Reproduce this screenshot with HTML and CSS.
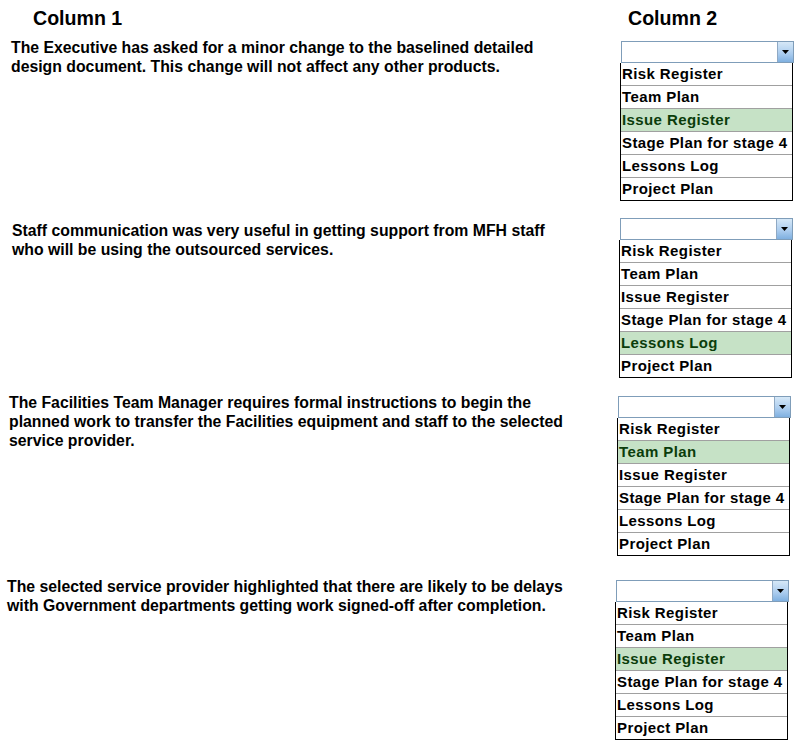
FILE: index.html
```html
<!DOCTYPE html>
<html>
<head>
<meta charset="utf-8">
<link rel="stylesheet" href="styles.css">
</head>
<body>
<div class="page">
  <div class="header">
    <div class="col1">Column 1</div>
    <div class="col2">Column 2</div>
  </div>

  <div class="block b1">
    <p class="q">The Executive has asked for a minor change to the baselined detailed<br>design document. This change will not affect any other products.</p>
    <div class="dd">
      <div class="sel"><span class="btn"><svg width="7" height="4" viewBox="0 0 7 4"><path d="M0 0H7L3.5 4Z" fill="#000"/></svg></span></div>
      <ul class="list">
        <li>Risk Register</li>
        <li>Team Plan</li>
        <li class="on">Issue Register</li>
        <li>Stage Plan for stage 4</li>
        <li>Lessons Log</li>
        <li>Project Plan</li>
      </ul>
    </div>
  </div>

  <div class="block b2">
    <p class="q">Staff communication was very useful in getting support from MFH staff<br>who will be using the outsourced services.</p>
    <div class="dd">
      <div class="sel"><span class="btn"><svg width="7" height="4" viewBox="0 0 7 4"><path d="M0 0H7L3.5 4Z" fill="#000"/></svg></span></div>
      <ul class="list">
        <li>Risk Register</li>
        <li>Team Plan</li>
        <li>Issue Register</li>
        <li>Stage Plan for stage 4</li>
        <li class="on">Lessons Log</li>
        <li>Project Plan</li>
      </ul>
    </div>
  </div>

  <div class="block b3">
    <p class="q">The Facilities Team Manager requires formal instructions to begin the<br>planned work to transfer the Facilities equipment and staff to the selected<br>service provider.</p>
    <div class="dd">
      <div class="sel"><span class="btn"><svg width="7" height="4" viewBox="0 0 7 4"><path d="M0 0H7L3.5 4Z" fill="#000"/></svg></span></div>
      <ul class="list">
        <li>Risk Register</li>
        <li class="on">Team Plan</li>
        <li>Issue Register</li>
        <li>Stage Plan for stage 4</li>
        <li>Lessons Log</li>
        <li>Project Plan</li>
      </ul>
    </div>
  </div>

  <div class="block b4">
    <p class="q">The selected service provider highlighted that there are likely to be delays<br>with Government departments getting work signed-off after completion.</p>
    <div class="dd">
      <div class="sel"><span class="btn"><svg width="7" height="4" viewBox="0 0 7 4"><path d="M0 0H7L3.5 4Z" fill="#000"/></svg></span></div>
      <ul class="list">
        <li>Risk Register</li>
        <li>Team Plan</li>
        <li class="on">Issue Register</li>
        <li>Stage Plan for stage 4</li>
        <li>Lessons Log</li>
        <li>Project Plan</li>
      </ul>
    </div>
  </div>
</div>
</body>
</html>
```

FILE: styles.css
```css
html, body {
  margin: 0;
  padding: 0;
  background: #fff;
}
body {
  font-family: "Liberation Sans", Arial, sans-serif;
  color: #000;
  width: 799px;
  height: 753px;
  overflow: hidden;
}
.page {
  display: flex;
  flex-direction: column;
}
.header {
  display: flex;
  height: 41px;
  font-weight: bold;
  font-size: 19.6px;
}
.col1 {
  margin-left: 33px;
  margin-top: 7px;
  width: 595px;
}
.col2 {
  margin-top: 7px;
}
.block {
  display: flex;
  justify-content: space-between;
  align-items: flex-start;
}
.q {
  margin: 0;
  font-size: 15.8px;
  font-weight: bold;
  line-height: 19px;
}
.b1 { padding-left: 11px; padding-right: 5px; height: 177px; }
.b1 .q { margin-top: -3px; }
.b2 { padding-left: 12px; padding-right: 6px; height: 178px; }
.b2 .q { margin-top: 3px; }
.b3 { padding-left: 9px; padding-right: 8px; height: 184px; }
.b3 .q { margin-top: -3px; }
.b4 { padding-left: 7px; padding-right: 10px; }
.b4 .q { margin-top: -3px; }

.dd {
  width: 173px;
  display: flex;
  flex-direction: column;
}
.sel {
  height: 20px;
  border: 1px solid #7f9db9;
  background: #fff;
  display: flex;
  justify-content: flex-end;
  align-items: stretch;
}
.btn {
  width: 15px;
  background: linear-gradient(#d6e8f7, #a9cbee 60%, #7fb0e0);
  border-left: 1px solid #8fa9c4;
  display: flex;
  align-items: center;
  justify-content: center;
}
.list {
  list-style: none;
  margin: 0 1px 0 -1px;
  padding: 0;
  border: 1px solid #000;
  border-top: none;
}
.list li {
  height: 22px;
  line-height: 22px;
  font-size: 15px;
  font-weight: bold;
  letter-spacing: 0.4px;
  padding-left: 1px;
  border-bottom: 1px solid #a0a0a0;
  white-space: nowrap;
}
.list li:last-child {
  border-bottom: none;
}
.list li.on {
  background: #c6e2c6;
  color: #0b3d0b;
}
```
